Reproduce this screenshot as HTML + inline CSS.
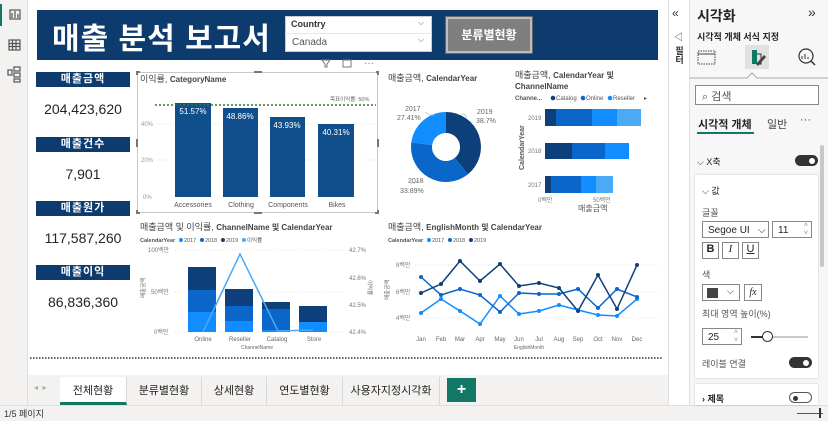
<!DOCTYPE html>
<html><head><meta charset="utf-8"><style>
*{margin:0;padding:0;box-sizing:border-box}
body{width:828px;height:421px;overflow:hidden;background:#fff;font-family:"Liberation Sans","Noto Sans CJK KR",sans-serif;position:relative;color:#252423}
.a{position:absolute}
.kl{position:absolute;left:36px;width:94px;height:15px;background:#0d3b6e;color:#fff;font-size:11px;font-weight:bold;text-align:center;line-height:15px;letter-spacing:1px}
.kv{position:absolute;left:36px;width:94px;text-align:center;font-size:14px;color:#252423}
.tab{position:absolute;top:377px;height:28px;font-size:11px;line-height:28px;text-align:center;border-right:1px solid #d8d8d8;color:#252423}
.tg{position:absolute;width:23px;height:11px;border-radius:6px;background:#333}
.tg:after{content:"";position:absolute;right:3px;top:2.5px;width:6px;height:6px;border-radius:50%;background:#fff}
.bx{position:absolute;border:1px solid #8a8886;background:#fff;font-size:10px;color:#252423}
</style></head><body>
<div class="a" style="left:0;top:0;width:28px;height:405px;background:#f3f2f1;border-right:1px solid #e1dfdd"></div>
<div class="a" style="left:0;top:4px;width:2px;height:22px;background:#117865"></div>
<svg class="a" style="left:0;top:0" width="28" height="90">
<g fill="none" stroke="#555" stroke-width="1.2"><rect x="10" y="10" width="10" height="9"/><path d="M12 18v-5M15 18v-7M18 18v-4"/>
<rect x="9" y="40" width="11" height="10"/><path d="M9 43.5h11M9 46.5h11M12.5 40v10M16 40v10"/>
<rect x="8" y="70" width="4" height="5"/><rect x="14" y="67" width="6" height="4"/><rect x="14" y="73" width="6" height="4"/><rect x="14" y="79" width="6" height="3"/></g></svg>
<div class="a" style="left:37px;top:10px;width:621px;height:50px;background:#0d3b6e"></div>
<div class="a" style="left:52px;top:14px;color:#fff;font-size:30px;font-weight:bold;letter-spacing:1px">매출 분석 보고서</div>
<div class="a" style="left:285px;top:16px;width:147px;height:36px;background:#fff;border:1px solid #ccc"></div>
<div class="a" style="left:291px;top:19px;font-size:9px;font-weight:bold;color:#333">Country</div>
<div class="a" style="left:285px;top:33px;width:147px;height:1px;background:#e6e6e6"></div>
<div class="a" style="left:292px;top:37px;font-size:10px;color:#555">Canada</div>
<div class="a" style="left:418px;top:18px;font-size:8px;color:#666">⌵</div>
<div class="a" style="left:418px;top:35px;font-size:8px;color:#666">⌵</div>
<div class="a" style="left:446px;top:17px;width:86px;height:36px;background:#7f7f7f;border:2px solid #bdbdbd;outline:1px solid #666;color:#fff;font-size:12px;font-weight:bold;text-align:center;line-height:32px">분류별현황</div>
<div class="kl" style="top:72px">매출금액</div><div class="kv" style="top:101px">204,423,620</div>
<div class="kl" style="top:137px">매출건수</div><div class="kv" style="top:166px">7,901</div>
<div class="kl" style="top:201px">매출원가</div><div class="kv" style="top:230px">117,587,260</div>
<div class="kl" style="top:265px">매출이익</div><div class="kv" style="top:294px">86,836,360</div>
<svg class="a" style="left:0;top:0" width="668" height="421" font-family="Liberation Sans, Noto Sans CJK KR, sans-serif">
<rect x="137.5" y="72.5" width="240" height="140" fill="none" stroke="#c8c8c8"/>
<g fill="#777"><rect x="254" y="71" width="8" height="2"/><rect x="254" y="212" width="8" height="2"/><rect x="136" y="139" width="2" height="8"/><rect x="377" y="139" width="2" height="8"/>
<path d="M136 71h4v2h-2v2h-2zM376 71h3v4h-2v-2h-1zM136 214h4v-2h-2v-2h-2zM379 214h-4v-2h2v-2h2z"/></g>
<g fill="none" stroke="#777" stroke-width="1"><path d="M322 60h8l-3 4v3h-2v-3z"/><rect x="343" y="60" width="8" height="7"/></g>
<text x="364" y="66" font-size="10" fill="#777">···</text>
<text x="140" y="82" font-size="9" fill="#444">이익률, <tspan font-weight="bold" font-size="8">CategoryName</tspan></text>
<g stroke="#e3e3e3" stroke-dasharray="1,2"><path d="M158 124h218M158 160h218"/></g>
<g font-size="6" fill="#999"><text x="141" y="126">40%</text><text x="141" y="162">20%</text><text x="143" y="199">0%</text></g>
<g fill="#104f8c"><rect x="175" y="103" width="36" height="94"/><rect x="223" y="108" width="35" height="89"/><rect x="270" y="117" width="35" height="80"/><rect x="318" y="124" width="36" height="73"/></g>
<path d="M155 105h221" stroke="#2f7a2f" stroke-width="1.5" stroke-dasharray="2,2"/>
<text x="330" y="101" font-size="5.5" fill="#666">목표이익률: 50%</text>
<g font-size="8" fill="#fff" text-anchor="middle"><text x="193" y="114">51.57%</text><text x="240" y="119">48.86%</text><text x="287" y="128">43.93%</text><text x="336" y="135">40.31%</text></g>
<g font-size="7" fill="#555" text-anchor="middle"><text x="193" y="207">Accessories</text><text x="241" y="207">Clothing</text><text x="288" y="207">Components</text><text x="337" y="207">Bikes</text></g>
<text x="388" y="81" font-size="9" fill="#444">매출금액, <tspan font-weight="bold" font-size="8">CalendarYear</tspan></text>
<g transform="translate(446,147)">
<path d="M0 -35A35 35 0 0 1 22 27.2L8.8 10.9A14 14 0 0 0 0 -14Z" fill="#0d3f7a"/>
<path d="M22 27.2A35 35 0 0 1 -34.7 -4.7L-13.9 -1.9A14 14 0 0 0 8.8 10.9Z" fill="#0a66c8"/>
<path d="M-34.7 -4.7A35 35 0 0 1 0 -35L0 -14A14 14 0 0 0 -13.9 -1.9Z" fill="#118dff"/>
</g>
<g fill="none" stroke="#bbb" stroke-width="0.7"><path d="M425 112l5 3h4M467 117l-3-3h-3M410 183l5 0l4 -3"/></g>
<g font-size="7" fill="#666"><text x="405" y="111">2017</text><text x="397" y="120">27.41%</text><text x="477" y="114">2019</text><text x="476" y="123">38.7%</text><text x="408" y="183">2018</text><text x="400" y="193">33.89%</text></g>
<text x="515" y="78" font-size="9" fill="#444">매출금액, <tspan font-weight="bold" font-size="8">CalendarYear 및</tspan></text>
<text x="515" y="89" font-size="8" font-weight="bold" fill="#444">ChannelName</text>
<g font-size="6" fill="#555"><text x="515" y="100" font-weight="bold">Channe...</text><circle cx="553" cy="98" r="2.3" fill="#0d3f7a"/><text x="556" y="100">Catalog</text><circle cx="583" cy="98" r="2.3" fill="#0a66c8"/><text x="586" y="100">Online</text><circle cx="610" cy="98" r="2.3" fill="#118dff"/><text x="613" y="100">Reseller</text><text x="644" y="100">▸</text></g>
<g><rect x="545" y="109" width="11" height="17" fill="#0d3f7a"/><rect x="556" y="109" width="36" height="17" fill="#0a66c8"/><rect x="592" y="109" width="25" height="17" fill="#118dff"/><rect x="617" y="109" width="24" height="17" fill="#4aaaf5"/>
<rect x="545" y="143" width="27" height="16" fill="#0d3f7a"/><rect x="572" y="143" width="33" height="16" fill="#0a66c8"/><rect x="605" y="143" width="24" height="16" fill="#118dff"/>
<rect x="545" y="176" width="6" height="17" fill="#0d3f7a"/><rect x="551" y="176" width="30" height="17" fill="#0a66c8"/><rect x="581" y="176" width="15" height="17" fill="#118dff"/><rect x="596" y="176" width="17" height="17" fill="#4aaaf5"/></g>
<g font-size="6" fill="#777"><text x="528" y="120">2019</text><text x="528" y="153">2018</text><text x="528" y="187">2017</text><text x="538" y="202">0백만</text><text x="593" y="202">50백만</text></g>
<text x="578" y="211" font-size="8" fill="#555">매출금액</text>
<text transform="translate(524,170) rotate(-90)" font-size="7" fill="#555" font-weight="bold">CalendarYear</text>
<text x="140" y="230" font-size="9" fill="#444">매출금액 및 이익률, <tspan font-weight="bold" font-size="8">ChannelName 및 CalendarYear</tspan></text>
<g font-size="5.5" fill="#555"><text x="140" y="242" font-weight="bold">CalendarYear</text><circle cx="181" cy="240" r="2" fill="#118dff"/><text x="184" y="242">2017</text><circle cx="202" cy="240" r="2" fill="#0a66c8"/><text x="205" y="242">2018</text><circle cx="223" cy="240" r="2" fill="#0d3f7a"/><text x="226" y="242">2019</text><circle cx="244" cy="240" r="2" fill="#4aaaf5"/><text x="247" y="242">이익률</text></g>
<g stroke="#e3e3e3" stroke-dasharray="1,2"><path d="M175 250h170M175 292h170M175 332h170"/></g>
<g font-size="6" fill="#777"><text x="148" y="252">100백만</text><text x="151" y="294">50백만</text><text x="154" y="334">0백만</text><text x="349" y="252">42.7%</text><text x="349" y="280">42.6%</text><text x="349" y="307">42.5%</text><text x="349" y="334">42.4%</text></g>
<g><rect x="188" y="267" width="28" height="23" fill="#0d3f7a"/><rect x="188" y="290" width="28" height="22" fill="#0a66c8"/><rect x="188" y="312" width="28" height="20" fill="#118dff"/>
<rect x="225" y="289" width="28" height="17" fill="#0d3f7a"/><rect x="225" y="306" width="28" height="15" fill="#0a66c8"/><rect x="225" y="321" width="28" height="11" fill="#118dff"/>
<rect x="262" y="302" width="28" height="7" fill="#0d3f7a"/><rect x="262" y="309" width="28" height="21" fill="#0a66c8"/><rect x="262" y="330" width="28" height="2" fill="#118dff"/>
<rect x="299" y="306" width="28" height="16" fill="#0d3f7a"/><rect x="299" y="322" width="28" height="10" fill="#118dff"/></g>
<polyline points="203,332 240,254 278,331 313,330" fill="none" stroke="#4aaaf5" stroke-width="1.5"/>
<g font-size="6" fill="#666" text-anchor="middle"><text x="203" y="341">Online</text><text x="240" y="341">Reseller</text><text x="277" y="341">Catalog</text><text x="314" y="341">Store</text><text x="257" y="349" font-size="5">ChannelName</text></g>
<text transform="translate(145,298) rotate(-90)" font-size="5.5" fill="#666">매출금액</text>
<text transform="translate(368,280) rotate(90)" font-size="5.5" fill="#666">이익률</text>
<text x="388" y="230" font-size="9" fill="#444">매출금액, <tspan font-weight="bold" font-size="8">EnglishMonth 및 CalendarYear</tspan></text>
<g font-size="5.5" fill="#555"><text x="388" y="242" font-weight="bold">CalendarYear</text><circle cx="429" cy="240" r="2" fill="#118dff"/><text x="432" y="242">2017</text><circle cx="450" cy="240" r="2" fill="#0a66c8"/><text x="453" y="242">2018</text><circle cx="471" cy="240" r="2" fill="#0d3f7a"/><text x="474" y="242">2019</text></g>
<g stroke="#e3e3e3" stroke-dasharray="1,2"><path d="M415 265h245M415 292h245M415 318h245"/></g>
<g font-size="6" fill="#777"><text x="396" y="267">8백만</text><text x="396" y="294">6백만</text><text x="396" y="320">4백만</text></g>
<text transform="translate(389,300) rotate(-90)" font-size="5.5" fill="#666">매출금액</text>
<g fill="none" stroke-width="1.5">
<polyline stroke="#118dff" points="421,313 441,299 460,311 480,324 500,296 519,314 539,311 559,305 578,310 598,315 617,316 637,299"/>
<polyline stroke="#0a66c8" points="421,277 441,295 460,289 480,295 500,312 519,293 539,294 559,294 578,289 598,308 617,289 637,297"/>
<polyline stroke="#0d3f7a" points="421,293 441,284 460,261 480,281 500,264 519,286 539,283 559,288 578,311 598,275 617,309 637,265"/>
</g>
<g fill="#118dff"><circle cx="421" cy="313" r="2"/><circle cx="441" cy="299" r="2"/><circle cx="460" cy="311" r="2"/><circle cx="480" cy="324" r="2"/><circle cx="500" cy="296" r="2"/><circle cx="519" cy="314" r="2"/><circle cx="539" cy="311" r="2"/><circle cx="559" cy="305" r="2"/><circle cx="578" cy="310" r="2"/><circle cx="598" cy="315" r="2"/><circle cx="617" cy="316" r="2"/><circle cx="637" cy="299" r="2"/></g>
<g fill="#0a66c8"><circle cx="421" cy="277" r="2"/><circle cx="441" cy="295" r="2"/><circle cx="460" cy="289" r="2"/><circle cx="480" cy="295" r="2"/><circle cx="500" cy="312" r="2"/><circle cx="519" cy="293" r="2"/><circle cx="539" cy="294" r="2"/><circle cx="559" cy="294" r="2"/><circle cx="578" cy="289" r="2"/><circle cx="598" cy="308" r="2"/><circle cx="617" cy="289" r="2"/><circle cx="637" cy="297" r="2"/></g>
<g fill="#0d3f7a"><circle cx="421" cy="293" r="2"/><circle cx="441" cy="284" r="2"/><circle cx="460" cy="261" r="2"/><circle cx="480" cy="281" r="2"/><circle cx="500" cy="264" r="2"/><circle cx="519" cy="286" r="2"/><circle cx="539" cy="283" r="2"/><circle cx="559" cy="288" r="2"/><circle cx="578" cy="311" r="2"/><circle cx="598" cy="275" r="2"/><circle cx="617" cy="309" r="2"/><circle cx="637" cy="265" r="2"/></g>
<g font-size="6" fill="#666" text-anchor="middle"><text x="421" y="341">Jan</text><text x="441" y="341">Feb</text><text x="460" y="341">Mar</text><text x="480" y="341">Apr</text><text x="500" y="341">May</text><text x="519" y="341">Jun</text><text x="539" y="341">Jul</text><text x="559" y="341">Aug</text><text x="578" y="341">Sep</text><text x="598" y="341">Oct</text><text x="617" y="341">Nov</text><text x="637" y="341">Dec</text><text x="529" y="349" font-size="5">EnglishMonth</text></g>
<path d="M30 358h632" stroke="#333" stroke-width="1.5" stroke-dasharray="1.5,1.5"/>
</svg>
<div class="a" style="left:28px;top:375px;width:640px;height:30px;background:#f3f2f1"></div>
<div class="a" style="left:34px;top:383px;font-size:8px;color:#aaa">◂ &nbsp;▸</div>
<div class="tab" style="left:60px;width:67px;background:#fff;border-bottom:3px solid #117865">전체현황</div>
<div class="tab" style="left:127px;width:75px">분류별현황</div>
<div class="tab" style="left:202px;width:65px">상세현황</div>
<div class="tab" style="left:267px;width:76px">연도별현황</div>
<div class="tab" style="left:343px;width:97px">사용자지정시각화</div>
<div class="a" style="left:447px;top:378px;width:29px;height:24px;background:#117865;color:#fff;font-size:16px;font-weight:bold;text-align:center;line-height:24px">+</div>
<div class="a" style="left:0;top:405px;width:828px;height:16px;background:#f3f2f1;border-top:1px solid #e1dfdd"></div>
<div class="a" style="left:4px;top:407px;font-size:9px;color:#333">1/5 페이지</div>
<div class="a" style="left:797px;top:413px;width:26px;height:1px;background:#555"></div>
<div class="a" style="left:819px;top:408px;width:2px;height:10px;background:#333"></div>
<div class="a" style="left:668px;top:0;width:22px;height:405px;background:#fff;border-left:1px solid #e1dfdd;border-right:1px solid #e1dfdd"></div>
<div class="a" style="left:672px;top:6px;font-size:12px;color:#333">«</div>
<div class="a" style="left:674px;top:30px;font-size:9px;color:#333">◁</div>
<div class="a" style="left:673px;top:46px;font-size:9px;font-weight:bold;color:#333;writing-mode:vertical-rl;text-orientation:upright">필터</div>
<div class="a" style="left:690px;top:0;width:138px;height:405px;background:#f7f7f7"></div>
<div class="a" style="left:697px;top:6px;font-size:14px;font-weight:bold;color:#252423">시각화</div>
<div class="a" style="left:808px;top:4px;font-size:14px;color:#333">»</div>
<div class="a" style="left:697px;top:30px;font-size:9px;font-weight:bold;color:#252423">시각적 개체 서식 지정</div>
<svg class="a" style="left:690px;top:44px" width="138" height="38">
<rect x="8" y="7" width="17" height="13" fill="none" stroke="#444" stroke-dasharray="1.5,1"/><path d="M8 10h17" stroke="#444"/>
<rect x="55" y="1" width="24" height="24" fill="#e1e1e1"/>
<path d="M62 6h5v14h-5z" fill="#117865"/><path d="M67 10h4v10h-4" fill="none" stroke="#333"/><path d="M66 20l8-9 2 2-8 9z" fill="#444"/>
<circle cx="116" cy="12" r="7" fill="none" stroke="#333" stroke-width="1.2"/><path d="M121 17l4 4" stroke="#333" stroke-width="1.5"/><path d="M112 15v-3M115 15v-5M118 15v-2" stroke="#333"/>
<path d="M0 34h57l5-5 5 5h71" fill="none" stroke="#aaa"/>
</svg>
<div class="a" style="left:695px;top:85px;width:124px;height:20px;background:#fff;border:1px solid #8a8886;font-size:11px;color:#555;padding:2px 0 0 6px">⌕ 검색</div>
<div class="a" style="left:698px;top:116px;font-size:11px;font-weight:bold;color:#252423">시각적 개체</div>
<div class="a" style="left:697px;top:132px;width:57px;height:2px;background:#117865"></div>
<div class="a" style="left:767px;top:116px;font-size:11px;color:#444">일반</div>
<div class="a" style="left:800px;top:114px;font-size:11px;color:#444">···</div>
<div class="a" style="left:820px;top:145px;width:4px;height:122px;background:#c8c8c8;border-radius:2px"></div>
<div class="a" style="left:697px;top:155px;font-size:9px;color:#252423">⌵ X축</div>
<div class="tg" style="left:795px;top:155px"></div>
<div class="a" style="left:695px;top:175px;width:123px;height:203px;background:#fff;box-shadow:0 0 2px rgba(0,0,0,.2);border-radius:2px"></div>
<div class="a" style="left:702px;top:184px;font-size:9px;color:#252423">⌵ 값</div>
<div class="a" style="left:702px;top:206px;font-size:9px;color:#555">글꼴</div>
<div class="bx" style="left:702px;top:221px;width:67px;height:17px;padding:3px 0 0 5px">Segoe UI &nbsp;&nbsp;⌵</div>
<div class="bx" style="left:772px;top:221px;width:40px;height:17px;padding:3px 0 0 5px">11<span style="position:absolute;right:3px;top:0;font-size:7px;color:#888;line-height:8px">˄<br>˅</span></div>
<div class="bx" style="left:702px;top:242px;width:17px;height:17px;font-weight:bold;font-size:11px;text-align:center">B</div>
<div class="bx" style="left:722px;top:242px;width:17px;height:17px;font-style:italic;font-family:'Liberation Serif',serif;font-size:11px;text-align:center">I</div>
<div class="bx" style="left:742px;top:242px;width:17px;height:17px;text-decoration:underline;font-size:11px;text-align:center">U</div>
<div class="a" style="left:702px;top:268px;font-size:9px;color:#555">색</div>
<div class="bx" style="left:702px;top:284px;width:38px;height:17px"><div style="position:absolute;left:4px;top:3px;width:11px;height:10px;background:#444"></div><span style="position:absolute;left:24px;top:1px;font-size:9px">⌵</span></div>
<div class="bx" style="left:744px;top:284px;width:18px;height:17px;font-family:'Liberation Serif',serif;font-style:italic;text-align:center;line-height:15px">fx</div>
<div class="a" style="left:702px;top:307px;font-size:9px;color:#555">최대 영역 높이(%)</div>
<div class="bx" style="left:702px;top:328px;width:40px;height:17px;padding:3px 0 0 5px">25<span style="position:absolute;right:3px;top:0;font-size:7px;color:#888;line-height:8px">˄<br>˅</span></div>
<div class="a" style="left:751px;top:336px;width:57px;height:2px;background:#c8c8c8"></div>
<div class="a" style="left:751px;top:336px;width:14px;height:2px;background:#333"></div>
<div class="a" style="left:762px;top:331px;width:11px;height:11px;border-radius:50%;background:#fff;border:1px solid #333"></div>
<div class="a" style="left:702px;top:357px;font-size:9px;color:#555">레이블 연결</div>
<div class="tg" style="left:789px;top:357px"></div>
<div class="a" style="left:695px;top:384px;width:123px;height:21px;background:#fff;box-shadow:0 0 2px rgba(0,0,0,.2)"></div>
<div class="a" style="left:702px;top:392px;font-size:9px;font-weight:bold;color:#252423">› 제목</div>
<div class="a" style="left:789px;top:392px;width:23px;height:11px;border-radius:6px;border:1px solid #555"><div style="position:absolute;left:3px;top:2.5px;width:5px;height:5px;border-radius:50%;background:#333"></div></div>
</body></html>
